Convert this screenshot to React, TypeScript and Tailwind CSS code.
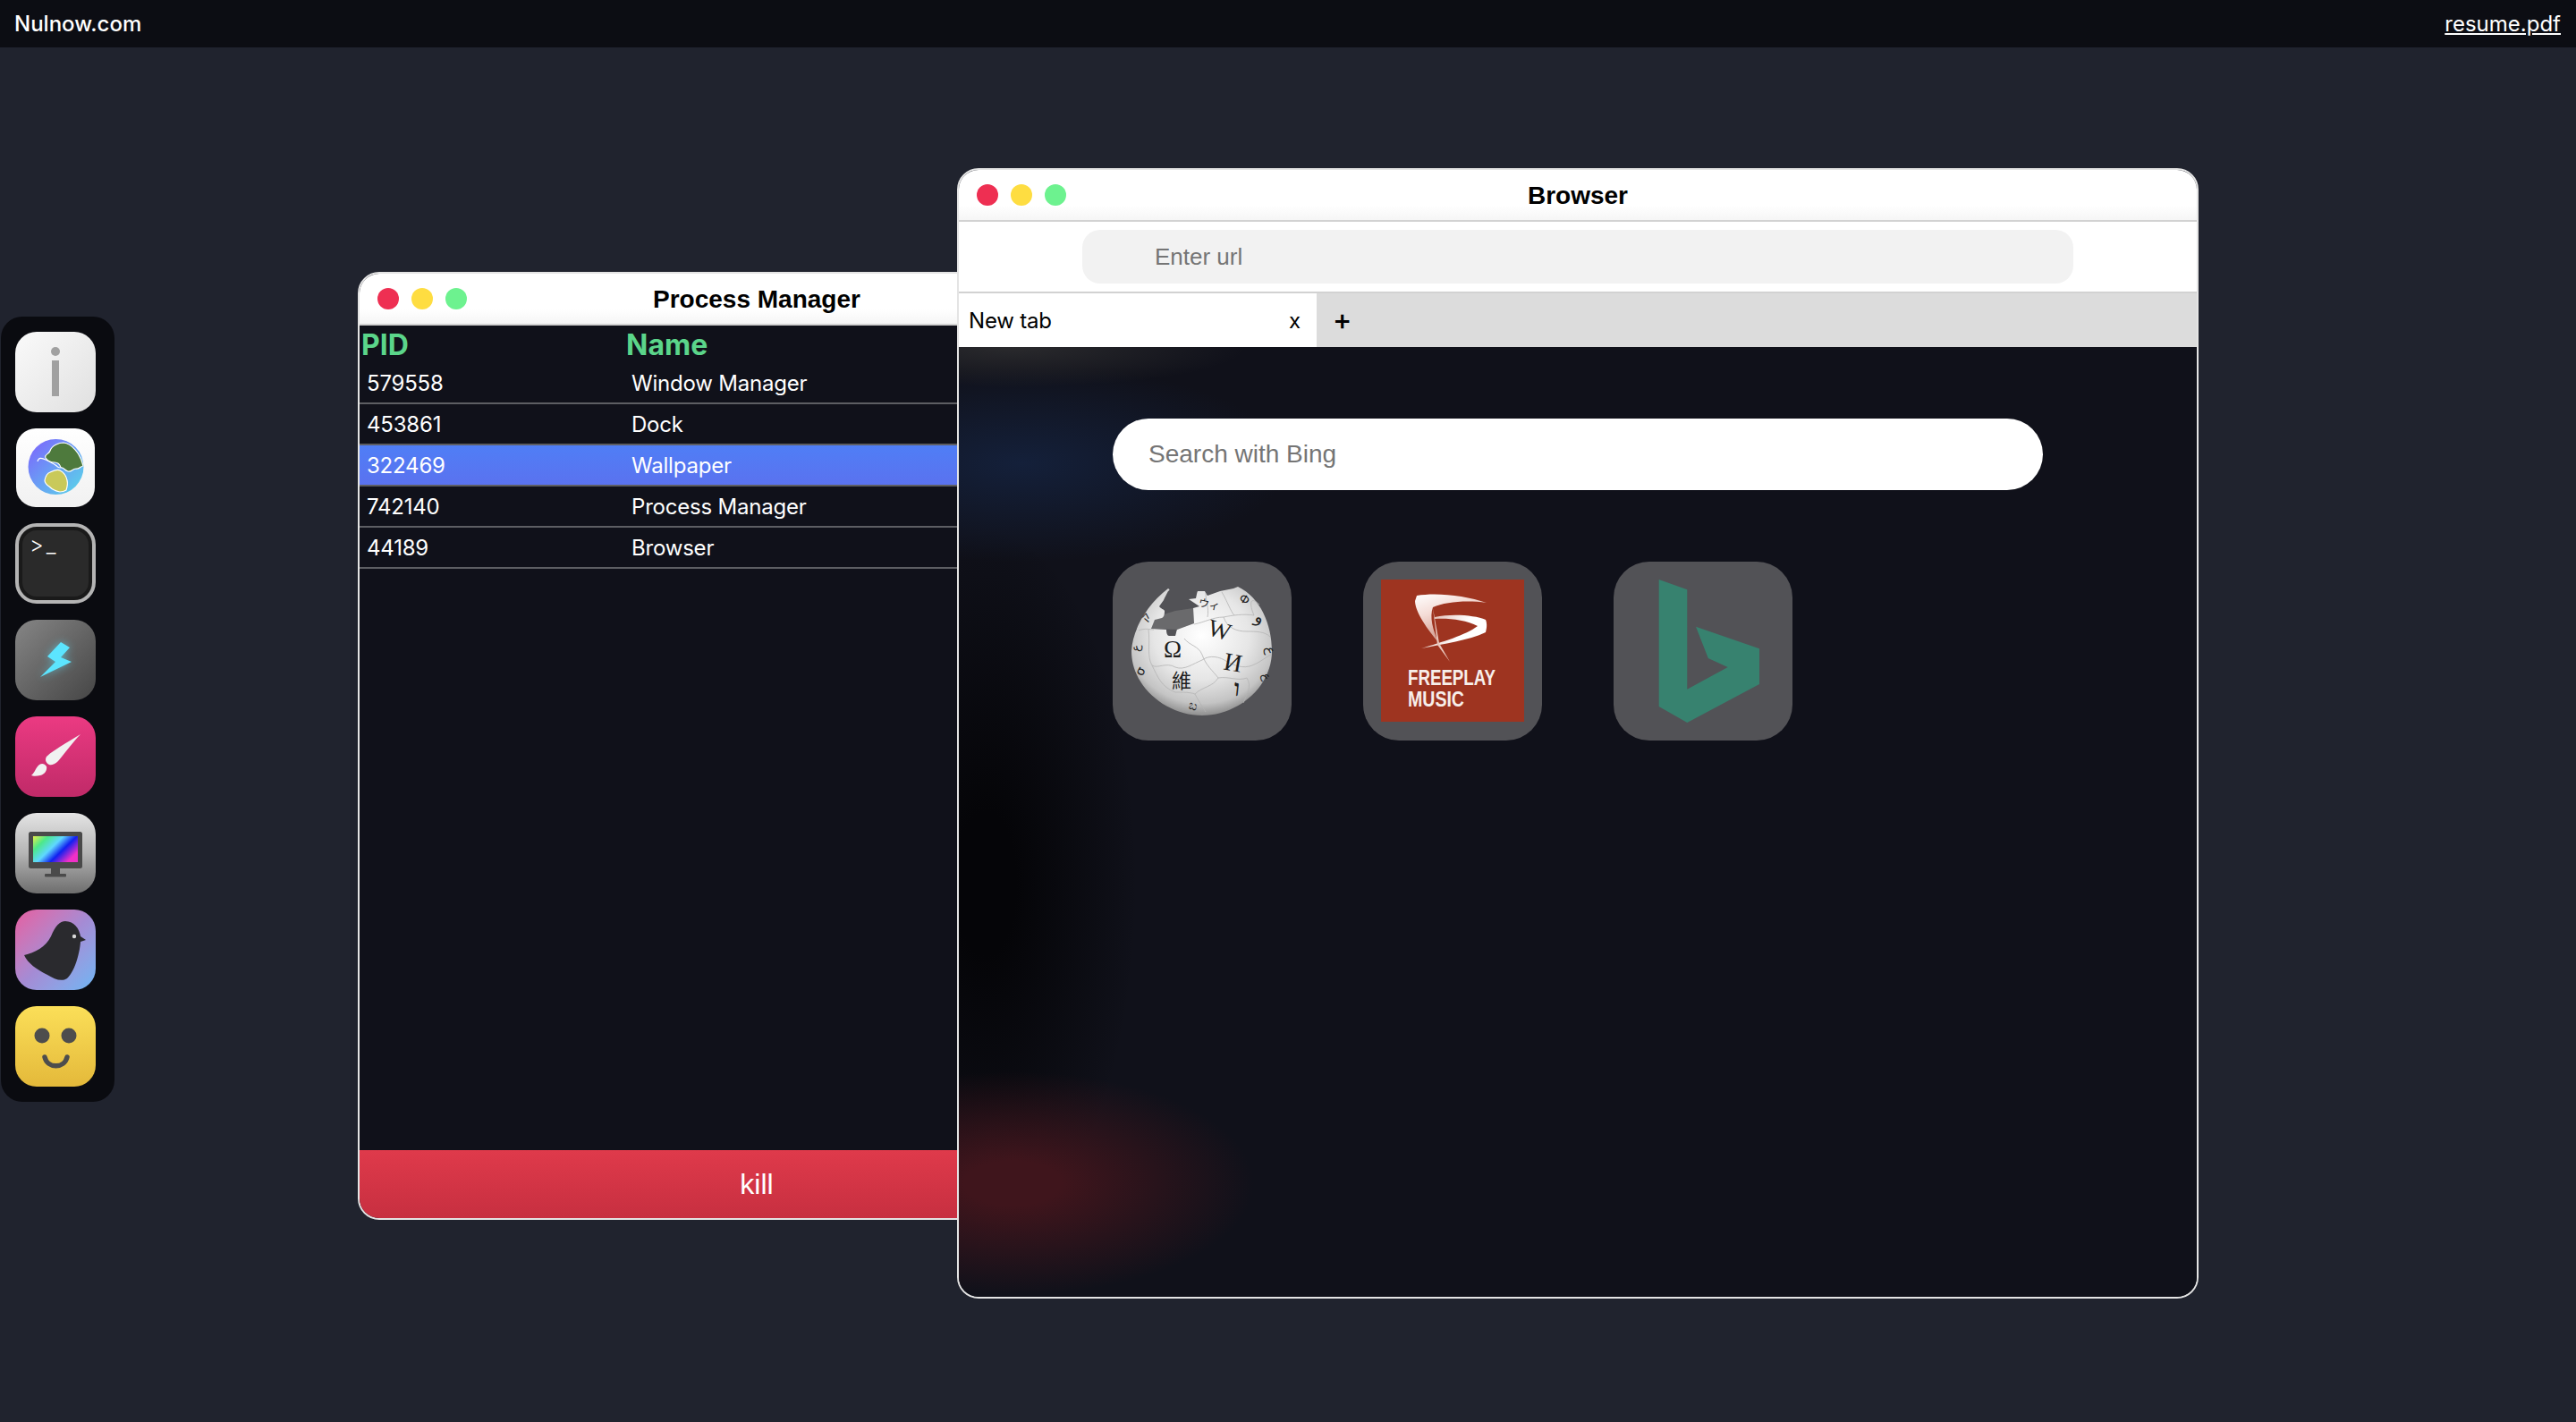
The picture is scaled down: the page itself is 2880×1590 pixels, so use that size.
const processes = [
  { pid: 579558, name: 'Window Manager' },
  { pid: 453861, name: 'Dock' },
  { pid: 322469, name: 'Wallpaper', selected: true },
  { pid: 742140, name: 'Process Manager' },
  { pid: 44189, name: 'Browser' },
];

function TrafficLights() {
  return (
    <div className="flex gap-[14px]">
      <span className="h-6 w-6 rounded-full bg-[#ee2f52]" />
      <span className="h-6 w-6 rounded-full bg-[#fedd41]" />
      <span className="h-6 w-6 rounded-full bg-[#6df28f]" />
    </div>
  );
}

function TitleBar({ title }: { title: string }) {
  return (
    <div className="grid h-[58px] shrink-0 grid-cols-[1fr_auto_1fr] items-center border-b-2 border-[#d2d2d2] bg-gradient-to-b from-white from-70% to-[#f6f6f6] px-5">
      <TrafficLights />
      <h2 className="pt-[2px] font-['Liberation_Sans',sans-serif] text-[28px] font-bold text-black">{title}</h2>
      <span />
    </div>
  );
}

function InfoIcon() {
  return (
    <div className="flex h-[90px] w-[90px] flex-col items-center gap-[5px] rounded-[24px] bg-gradient-to-br from-[#fafafa] to-[#e0e0e0] pt-[17px]">
      <span className="h-[10px] w-[10px] rounded-full bg-[#a0a0a0]" />
      <span className="h-10 w-2 bg-[#a0a0a0]" />
    </div>
  );
}

function EarthIcon() {
  return (
    <div className="mx-[1px] h-[88px] w-[88px] rounded-[22px] bg-gradient-to-b from-white to-[#f1f1f1]">
      <svg viewBox="0 0 88 88" className="h-full w-full">
        <defs>
          <linearGradient id="sea" x1="0.1" y1="0.1" x2="0.9" y2="0.9">
            <stop offset="0" stopColor="#7a6cfb" />
            <stop offset="0.45" stopColor="#6b9af5" />
            <stop offset="1" stopColor="#5ccdea" />
          </linearGradient>
          <clipPath id="earth-clip">
            <circle cx="44.5" cy="43" r="31" />
          </clipPath>
        </defs>
        <circle cx="44.5" cy="43" r="31" fill="url(#sea)" />
        <g clipPath="url(#earth-clip)" stroke="#fff" strokeWidth="1.2">
          <path
            d="M33 33 C31 29 37 29 38 25 C40 19 48 16 53 16 C62 17 72 28 75 42 C72 42 71 46 67 45 C63 45 62 49 58 48 C54 47 53 43 50 44 C49 40 46 38 43 38 C38 38 35 36 33 33 Z"
            fill="#4e7a3d"
          />
          <path
            d="M32 58 C33 53 35 50 38 49 C42 47 47 46 49 47 C53 49 56 53 57 58 C58 62 57 66 56 69 C53 71 51 71 49 71 C44 70 40 68 37 65 C34 63 32 61 32 58 Z"
            fill="#c9c95a"
          />
          <path d="M24 37 C25 32 29 33 33 35 C37 37 41 39 44 41 C46 42 46 44 49 44" fill="none" />
        </g>
      </svg>
    </div>
  );
}

function TerminalIcon() {
  return (
    <div className="h-[90px] w-[90px] rounded-[24px] border-4 border-[#b4b4b4] bg-[#2a2a2a] shadow-[inset_0_0_0_4px_#1a1a1a]">
      <span className="ml-3 mt-2 block text-[24px] font-light leading-[26px] tracking-[3px] text-white">
        {'>_'}
      </span>
    </div>
  );
}

function BoltIcon() {
  return (
    <div className="h-[90px] w-[90px] rounded-[24px] bg-gradient-to-br from-[#868686] to-[#464646]">
      <svg viewBox="0 0 90 90" className="h-full w-full">
        <defs>
          <filter id="glow" x="-50%" y="-50%" width="200%" height="200%">
            <feGaussianBlur stdDeviation="5" />
          </filter>
        </defs>
        <polygon points="51,25 61,31 51,42 63,47 28,64 45,47 36,41" fill="#5ce5ff" opacity="0.55" filter="url(#glow)" />
        <polygon points="51,25 61,31 51,42 63,47 28,64 45,47 36,41" fill="#5ce5ff" />
      </svg>
    </div>
  );
}

function BrushIcon() {
  return (
    <div className="h-[90px] w-[90px] rounded-[24px] bg-gradient-to-b from-[#eb3a82] to-[#c02a68]">
      <svg viewBox="0 0 90 90" className="h-full w-full" fill="#f1f1f1">
        <path d="M73 20 C65 28 55 42 48 50 C44 54 40 55 38 54 C34 52 33 48 35 45 C40 40 46 37 50 34 C58 29 66 24 73 20 Z" />
        <path d="M27 54 C30 52 33 53 35 56 C36 60 33 65 28 66 C24 67 20 67 18 66 C22 63 23 57 27 54 Z" />
      </svg>
    </div>
  );
}

function MonitorIcon() {
  return (
    <div className="h-[90px] w-[90px] rounded-[24px] bg-gradient-to-b from-[#e4e4e4] via-[#b5b5b5] to-[#6e6e6e]">
      <svg viewBox="0 0 90 90" className="h-full w-full">
        <defs>
          <linearGradient id="spectrum" x1="0" y1="0" x2="1" y2="0.6">
            <stop offset="0" stopColor="#e6f04a" />
            <stop offset="0.25" stopColor="#4de88a" />
            <stop offset="0.5" stopColor="#5fd8ff" />
            <stop offset="0.72" stopColor="#1020f0" />
            <stop offset="1" stopColor="#f030c8" />
          </linearGradient>
        </defs>
        <rect x="15" y="21" width="60" height="41" rx="2.5" fill="#4a4a4a" />
        <rect x="20" y="26" width="50" height="29" fill="url(#spectrum)" />
        <rect x="40" y="62" width="10" height="6" fill="#4a4a4a" />
        <rect x="33" y="68" width="24" height="3.5" rx="1" fill="#4a4a4a" />
      </svg>
    </div>
  );
}

function BirdIcon() {
  return (
    <div className="h-[90px] w-[90px] rounded-[24px] bg-gradient-to-br from-[#e65ca0] via-[#a58bd4] to-[#6bb6f4]">
      <svg viewBox="0 0 90 90" className="h-full w-full">
        <path
          d="M10 51 C22 48 34 42 40 30 C45 18 50 13 56 13 C66 13 72 22 73 30 L79 34 L73 36 C72 50 66 70 58 77 C52 81 44 78 36 73 C24 67 14 60 10 51 Z"
          fill="#2a2a2e"
        />
        <circle cx="66" cy="30" r="2.2" fill="#d8d8d8" />
      </svg>
    </div>
  );
}

function SmileIcon() {
  return (
    <div className="h-[90px] w-[90px] rounded-[24px] bg-gradient-to-b from-[#fbdf58] to-[#e4b93a]">
      <svg viewBox="0 0 90 90" className="h-full w-full" fill="#4d4d4d">
        <circle cx="30" cy="33" r="8.5" />
        <circle cx="60" cy="33" r="8.5" />
        <path d="M33 57 C36 70 55 70 58 57" fill="none" stroke="#4d4d4d" strokeWidth="5.5" strokeLinecap="round" />
      </svg>
    </div>
  );
}

function Dock() {
  return (
    <nav className="absolute left-[1px] top-[354px] flex flex-col gap-[18px] rounded-[24px] bg-[#0a0b10] py-[17px] pl-4 pr-[21px]">
      <InfoIcon />
      <EarthIcon />
      <TerminalIcon />
      <BoltIcon />
      <BrushIcon />
      <MonitorIcon />
      <BirdIcon />
      <SmileIcon />
    </nav>
  );
}

function ProcessManager() {
  return (
    <section className="absolute left-[400px] top-[251px] flex h-[1060px] w-[892px] flex-col overflow-hidden rounded-[24px] border-2 border-[#e4e4e4] bg-[#10111a]">
      <TitleBar title="Process Manager" />
      <div className="flex h-[42px] items-center pl-[2px] pt-[2px] text-[32px] font-bold text-[#5bd58a]">
        <span className="w-[296px]">PID</span>
        <span>Name</span>
      </div>
      {processes.map((p) => (
        <div
          key={p.pid}
          className={
            p.selected
              ? 'flex h-[46px] items-center border-b-2 border-[#5d5e63] bg-gradient-to-b from-[#4f7ef6] to-[#5a72ef] pl-2 pt-[2px] text-2xl tracking-[-0.2px] text-white'
              : 'flex h-[46px] items-center border-b-2 border-[#5d5e63] pl-2 pt-[2px] text-2xl tracking-[-0.2px] text-white'
          }
        >
          <span className="w-[296px]">{p.pid}</span>
          <span>{p.name}</span>
        </div>
      ))}
      <div className="flex-1" />
      <button className="h-[76px] shrink-0 bg-gradient-to-b from-[#df3a4b] to-[#c72f40] font-['Liberation_Sans',sans-serif] text-[32px] text-white">
        kill
      </button>
    </section>
  );
}

function WikipediaGlobe() {
  return (
    <svg viewBox="0 0 200 200" className="h-full w-full">
      <defs>
        <radialGradient id="globe" cx="0.5" cy="0.38" r="0.62">
          <stop offset="0" stopColor="#ffffff" />
          <stop offset="0.55" stopColor="#e6e6e6" />
          <stop offset="0.85" stopColor="#c4c4c4" />
          <stop offset="1" stopColor="#8f8f8f" />
        </radialGradient>
      </defs>
      <path d="M47 65 L60 58 L70 55 L90 52 L91 69 L72 76 L43 75 Z" fill="#6a6a6c" />
      <path
        d="M21 100 C22 78 36 50 62 30 C64 31 64 32 62 33 C60 37 58 40 57 43 L52 50 C54 53 57 53 58 55 C58 60 57 62 55 63 L47 65 L43 75 L60 76 C60 80 61 83 63 83 L70 83 C71 80 71 78 72 76 L91 69 L90 52 L97 50 L85 42 L93 41 C94 37 94 35 95 33 L103 33 C104 35 105 37 106 38 L120 33 L135 30 L140 28 C165 40 178 70 178 100 C178 140 140 172 100 172 C60 172 21 140 21 100 Z"
        fill="url(#globe)"
      />
      <g fill="none" stroke="#b4b4b4" strokeWidth="0.8">
        <path d="M29 77 C36 74 42 76 46 76 M40 76 C42 92 38 106 44 116 C50 120 60 112 70 118 C80 122 90 114 100 110 C108 104 120 106 128 112" />
        <path d="M91 70 C102 68 112 62 124 62 C134 60 146 58 158 60 M124 62 C128 74 138 78 150 78 C160 78 170 78 176 84" />
        <path d="M80 86 C86 94 96 94 100 104 C104 116 112 122 118 130 C112 140 100 140 92 148 C96 156 100 162 104 168" />
        <path d="M44 116 C50 128 54 140 70 146 C80 146 86 146 92 148 M128 112 C136 116 146 120 156 116 C166 112 172 106 177 104" />
        <path d="M118 130 C130 128 140 134 150 130 C156 140 150 148 146 158 M122 34 C128 44 132 56 136 60" />
        <path d="M104 35 C104 44 108 52 106 62 M158 60 C152 46 154 38 164 48" />
      </g>
      <g fontFamily="'Liberation Serif', 'Noto Sans CJK JP', serif" fill="#1e1e1e" textAnchor="middle">
        <text x="67" y="107" fontSize="27">Ω</text>
        <text x="117" y="85" fontSize="27" transform="rotate(16 117 85)">W</text>
        <text x="133" y="122" fontSize="28" transform="rotate(10 133 122)">И</text>
        <text x="77" y="141" fontSize="22" fontFamily="'Noto Sans CJK TC', serif">維</text>
        <text x="107" y="52" fontSize="12" transform="rotate(12 107 52)" fontFamily="'Noto Sans CJK JP', serif">ウィ</text>
        <text x="138" y="150" fontSize="26" fontWeight="700" transform="rotate(6 138 150)">ו</text>
        <text x="162" y="68" fontSize="19" transform="rotate(20 162 68)" fontFamily="'DejaVu Sans', serif">و</text>
        <text x="145" y="46" fontSize="13" transform="rotate(30 145 46)" fontFamily="'DejaVu Sans', serif">Ф</text>
        <text x="30" y="97" fontSize="13" transform="rotate(-85 30 97)" fontFamily="'DejaVu Sans', serif">ع</text>
        <text x="35" y="125" fontSize="14" transform="rotate(-60 35 125)" fontFamily="'DejaVu Sans', serif">σ</text>
        <text x="40" y="64" fontSize="12" transform="rotate(-50 40 64)" fontFamily="'DejaVu Sans', serif">ק</text>
        <text x="172" y="100" fontSize="14" transform="rotate(80 172 100)" fontFamily="'DejaVu Sans', serif">ع</text>
        <text x="168" y="130" fontSize="13" transform="rotate(70 168 130)" fontFamily="'DejaVu Sans', serif">ع</text>
        <text x="88" y="165" fontSize="14" transform="rotate(18 88 165)" fontFamily="'DejaVu Sans', serif">ಬ</text>
      </g>
    </svg>
  );
}

function FreeplayLogo() {
  return (
    <svg viewBox="0 0 200 200" className="h-full w-full">
      <defs>
        <linearGradient id="swoosh" x1="0" y1="0" x2="0.5" y2="1">
          <stop offset="0" stopColor="#ffffff" />
          <stop offset="0.4" stopColor="#f4dcd6" />
          <stop offset="1" stopColor="#c98a7c" />
        </linearGradient>
        <linearGradient id="swoosh2" x1="0" y1="0" x2="1" y2="0.3">
          <stop offset="0" stopColor="#d8a99d" />
          <stop offset="0.7" stopColor="#ffffff" />
        </linearGradient>
      </defs>
      <rect x="20" y="20" width="160" height="159" fill="#9e3420" />
      <path d="M60 38 C82 34 115 38 138 46 C115 43 92 45 78 51 C74 62 78 76 84 90 C72 76 58 56 58 44 Z" fill="url(#swoosh)" />
      <path d="M80 62 C100 58 125 60 137 65 C139 70 138 75 137 79 C118 88 90 92 65 97 C88 90 115 82 128 72 C115 65 95 63 80 64 Z" fill="url(#swoosh2)" />
      <path d="M78 52 L85 91 L97 112 L83 93 Z" fill="#e9c6bc" />
      <g fontFamily="'Liberation Sans', sans-serif" fontWeight="700" fontSize="24" fill="#f7eeea">
        <text x="50" y="138" textLength="98" lengthAdjust="spacingAndGlyphs">FREEPLAY</text>
        <text x="50" y="162" textLength="63" lengthAdjust="spacingAndGlyphs">MUSIC</text>
      </g>
    </svg>
  );
}

function BingLogo() {
  return (
    <svg viewBox="0 0 200 200" className="h-full w-full">
      <polygon
        points="50.7,20 82.3,31.3 82.3,142.7 127.7,118 105.8,108 92,72.7 163,97.3 163,137 82.3,180 50.7,162"
        fill="#37826f"
      />
    </svg>
  );
}

function Browser() {
  return (
    <section className="absolute left-[1070px] top-[135px] flex h-[1264px] w-[1388px] flex-col overflow-hidden rounded-[24px] border-2 border-[#e4e4e4]">
      <TitleBar title="Browser" />
      <div className="flex h-[80px] shrink-0 items-center justify-center border-b-2 border-[#d2d2d2] bg-white">
        <div className="flex h-[60px] w-[1108px] items-center rounded-[20px] bg-[#f2f2f2] pl-[81px] font-['Liberation_Sans',sans-serif] text-[26px] text-[#757575]">
          Enter url
        </div>
      </div>
      <div className="flex h-[60px] shrink-0 items-center bg-[#dcdcdc] text-black">
        <div className="flex h-full w-[400px] items-center justify-between bg-white pl-[11px] pr-[18px] pt-[2px] text-2xl tracking-[-0.2px]">
          <span>New tab</span>
          <span>x</span>
        </div>
        <span className="ml-[18px] text-[32px] font-medium leading-none">+</span>
      </div>
      <div className="flex-1 bg-[#10111a] bg-[radial-gradient(ellipse_260px_45px_at_60px_0px,#2a2a2d_0%,transparent_100%),radial-gradient(ellipse_300px_110px_at_70px_130px,#14203a_0%,transparent_100%),radial-gradient(ellipse_270px_125px_at_60px_935px,#3f151c_20%,transparent_100%),radial-gradient(ellipse_170px_400px_at_30px_600px,#050508_20%,transparent_100%)] pt-[80px]">
        <div className="mx-auto flex w-[1040px] flex-col gap-[80px]">
          <div className="flex h-20 items-center rounded-full bg-white pl-10 font-['Liberation_Sans',sans-serif] text-[28px] text-[#757575]">
            Search with Bing
          </div>
          <div className="flex gap-[80px]">
            <div className="h-[200px] w-[200px] overflow-hidden rounded-[40px] bg-[#525256]">
              <WikipediaGlobe />
            </div>
            <div className="h-[200px] w-[200px] overflow-hidden rounded-[40px] bg-[#525256]">
              <FreeplayLogo />
            </div>
            <div className="h-[200px] w-[200px] overflow-hidden rounded-[40px] bg-[#525256]">
              <BingLogo />
            </div>
          </div>
        </div>
      </div>
    </section>
  );
}

export default function App() {
  return (
    <div className="flex h-[1590px] w-[2880px] flex-col overflow-hidden bg-[#20232e] font-[Inter,sans-serif]">
      <header className="flex h-[53px] shrink-0 items-center justify-between bg-[#0c0d13] px-4 text-2xl font-medium text-white">
        <span>Nulnow.com</span>
        <a href="#" className="pr-[1px] font-normal underline">
          resume.pdf
        </a>
      </header>
      <main className="relative flex-1">
        <ProcessManager />
        <Browser />
      </main>
      <Dock />
    </div>
  );
}
